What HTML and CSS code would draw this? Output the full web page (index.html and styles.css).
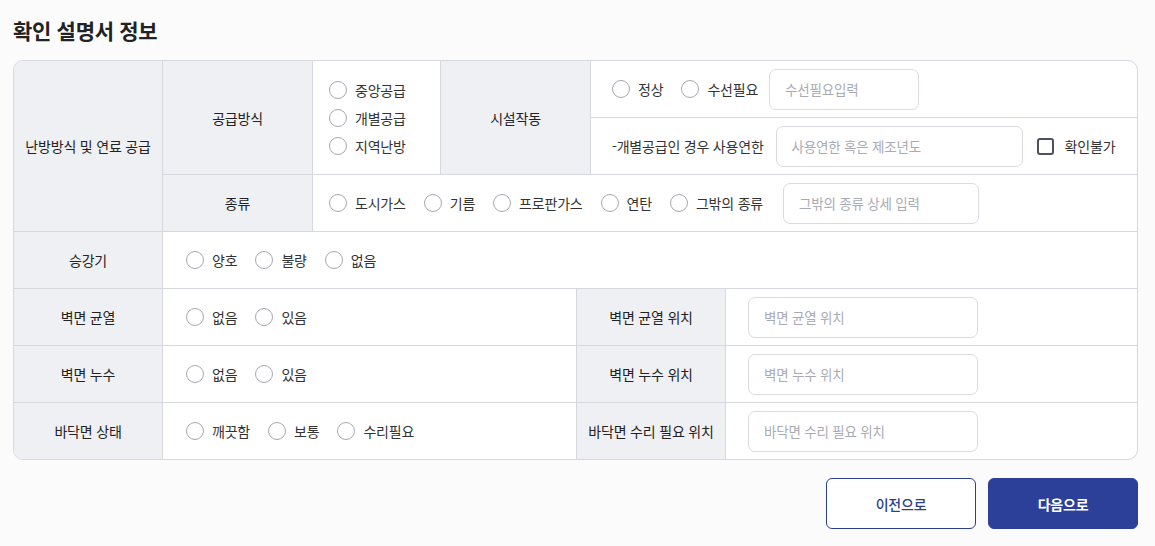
FILE: index.html
```html
<!DOCTYPE html>
<html lang="ko">
<head>
<meta charset="utf-8">
<title>확인 설명서 정보</title>
<link rel="stylesheet" href="styles.css">
</head>
<body>
<div class="page">
  <h1 class="title">확인 설명서 정보</h1>
  <div class="table">
    <div class="heat">
      <div class="cell head heat-label">난방방식 및 연료 공급</div>
      <div class="cell head">공급방식</div>
      <div class="cell supply">
        <label class="opt"><span class="radio"></span>중앙공급</label>
        <label class="opt"><span class="radio"></span>개별공급</label>
        <label class="opt"><span class="radio"></span>지역난방</label>
      </div>
      <div class="cell head">시설작동</div>
      <div class="cell facility">
        <div class="sub sub-top">
          <label class="opt"><span class="radio"></span>정상</label>
          <label class="opt"><span class="radio"></span>수선필요</label>
          <input class="inp inp-repair" placeholder="수선필요입력">
        </div>
        <div class="sub sub-bottom">
          <span class="sub-text">-개별공급인 경우 사용연한</span>
          <input class="inp inp-year" placeholder="사용연한 혹은 제조년도">
          <label class="check-opt"><span class="check"></span>확인불가</label>
        </div>
      </div>
      <div class="cell head">종류</div>
      <div class="cell kinds">
        <label class="opt"><span class="radio"></span>도시가스</label>
        <label class="opt"><span class="radio"></span>기름</label>
        <label class="opt"><span class="radio"></span>프로판가스</label>
        <label class="opt"><span class="radio"></span>연탄</label>
        <label class="opt"><span class="radio"></span>그밖의 종류</label>
        <input class="inp inp-kind" placeholder="그밖의 종류 상세 입력">
      </div>
    </div>

    <div class="row">
      <div class="cell head">승강기</div>
      <div class="cell opts span3">
        <label class="opt"><span class="radio"></span>양호</label>
        <label class="opt"><span class="radio"></span>불량</label>
        <label class="opt"><span class="radio"></span>없음</label>
      </div>
    </div>

    <div class="row">
      <div class="cell head">벽면 균열</div>
      <div class="cell opts">
        <label class="opt"><span class="radio"></span>없음</label>
        <label class="opt"><span class="radio"></span>있음</label>
      </div>
      <div class="cell head">벽면 균열 위치</div>
      <div class="cell field"><input class="inp inp-loc" placeholder="벽면 균열 위치"></div>
    </div>

    <div class="row">
      <div class="cell head">벽면 누수</div>
      <div class="cell opts">
        <label class="opt"><span class="radio"></span>없음</label>
        <label class="opt"><span class="radio"></span>있음</label>
      </div>
      <div class="cell head">벽면 누수 위치</div>
      <div class="cell field"><input class="inp inp-loc" placeholder="벽면 누수 위치"></div>
    </div>

    <div class="row row-last">
      <div class="cell head">바닥면 상태</div>
      <div class="cell opts">
        <label class="opt"><span class="radio"></span>깨끗함</label>
        <label class="opt"><span class="radio"></span>보통</label>
        <label class="opt"><span class="radio"></span>수리필요</label>
      </div>
      <div class="cell head">바닥면 수리 필요 위치</div>
      <div class="cell field"><input class="inp inp-loc" placeholder="바닥면 수리 필요 위치"></div>
    </div>
  </div>

  <div class="actions">
    <button class="btn btn-prev" type="button">이전으로</button>
    <button class="btn btn-next" type="button">다음으로</button>
  </div>
</div>
</body>
</html>
```
FILE: styles.css
```css
html, body {
  margin: 0;
  background: #fbfbfc;
}

body {
  font-family: "Noto Sans CJK KR", "Noto Sans", sans-serif;
  font-size: 14px;
  letter-spacing: -0.2px;
  color: #333;
}

.page {
  width: 1125px;
  padding: 15px 0 0 13px;
}

.title {
  margin: 0;
  font-size: 21px;
  line-height: 30px;
  font-weight: 600;
  color: #222;
  letter-spacing: -0.3px;
}

.table {
  margin-top: 15px;
  border: 1px solid #d6d8de;
  border-radius: 10px;
  overflow: hidden;
  background: #fff;
}

.cell {
  box-sizing: border-box;
  border-right: 1px solid #d6d8de;
  border-bottom: 1px solid #d6d8de;
  display: flex;
  align-items: center;
  min-width: 0;
}

.head {
  background: #eff0f4;
  justify-content: center;
  text-align: center;
  font-weight: 400;
  color: #222;
}

/* heating section */
.heat {
  display: grid;
  grid-template-columns: 149px 150px 128px 150px 1fr;
  grid-template-rows: 114px 57px;
}

.heat-label {
  grid-row: 1 / 3;
}

.supply {
  flex-direction: column;
  align-items: flex-start;
  justify-content: center;
  gap: 10px;
  padding-left: 16px;
}

.facility {
  border-right: none;
  flex-direction: column;
  align-items: stretch;
}

.sub {
  display: flex;
  align-items: center;
  box-sizing: border-box;
  padding-left: 21px;
}

.sub-top {
  height: 57px;
  border-bottom: 1px solid #d6d8de;
  gap: 18px;
}

.sub-bottom {
  height: 56px;
}

.sub-text {
  margin-right: 12px;
  white-space: nowrap;
}

.kinds {
  grid-column: 3 / 6;
  border-right: none;
  padding-left: 16px;
  gap: 18px;
}

/* option items */
.opt {
  display: inline-flex;
  align-items: center;
  gap: 8px;
  white-space: nowrap;
  line-height: 18px;
}

.radio {
  width: 18px;
  height: 18px;
  box-sizing: border-box;
  border: 1.5px solid #a6a8b0;
  border-radius: 50%;
  background: #fff;
  flex: none;
}

.check-opt {
  display: inline-flex;
  align-items: center;
  gap: 11px;
  margin-left: 14px;
  white-space: nowrap;
}

.check {
  width: 17px;
  height: 17px;
  box-sizing: border-box;
  border: 2px solid #4d515e;
  border-radius: 3px;
  flex: none;
}

/* inputs */
.inp {
  box-sizing: border-box;
  height: 41px;
  border: 1px solid #d9dbe0;
  border-radius: 7px;
  padding: 0 15px;
  font: inherit;
  font-size: 13.5px;
  letter-spacing: -0.2px;
  color: #333;
  background: #fff;
  outline: none;
}

.inp::placeholder {
  color: #a9abb3;
}

.inp-repair {
  width: 150px;
  margin-left: -7px;
}

.inp-year {
  width: 247px;
}

.inp-kind {
  width: 196px;
  margin-left: 2px;
}

.inp-loc {
  width: 230px;
}

/* plain rows */
.row {
  display: grid;
  grid-template-columns: 149px 414px 149px 1fr;
  height: 57px;
}

.row > .cell:last-child {
  border-right: none;
}

.row-last {
  height: 56px;
}

.row-last > .cell {
  border-bottom: none;
}

.opts {
  padding-left: 23px;
  gap: 18px;
}

.span3 {
  grid-column: 2 / 5;
}

.field {
  padding-left: 22px;
}

/* buttons */
.actions {
  display: flex;
  justify-content: flex-end;
  gap: 12px;
  margin-top: 18px;
}

.btn {
  width: 150px;
  height: 51px;
  border-radius: 6px;
  font-family: inherit;
  font-size: 14px;
  font-weight: 500;
  letter-spacing: -0.2px;
  cursor: pointer;
}

.btn-prev {
  background: #fff;
  border: 1px solid #2c3e8f;
  color: #2c3e8f;
}

.btn-next {
  background: #2c3f99;
  border: 1px solid #2c3f99;
  color: #fff;
  font-weight: 700;
}
```
